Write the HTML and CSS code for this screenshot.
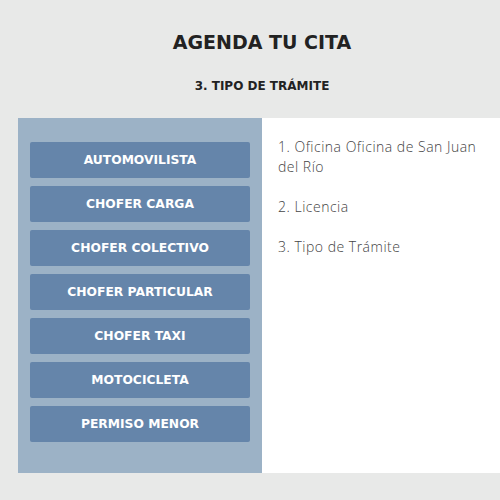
FILE: index.html
```html
<!DOCTYPE html>
<html lang="es">
<head>
<meta charset="utf-8">
<title>Agenda tu cita</title>
<link rel="stylesheet" href="styles.css">
</head>
<body>
<div class="page">
  <header class="head">
    <h1 class="title">AGENDA TU CITA</h1>
    <h2 class="subtitle">3. TIPO DE TRÁMITE</h2>
  </header>
  <main class="panel">
    <nav class="options">
      <button class="opt">AUTOMOVILISTA</button>
      <button class="opt">CHOFER CARGA</button>
      <button class="opt">CHOFER COLECTIVO</button>
      <button class="opt">CHOFER PARTICULAR</button>
      <button class="opt">CHOFER TAXI</button>
      <button class="opt">MOTOCICLETA</button>
      <button class="opt">PERMISO MENOR</button>
    </nav>
    <section class="summary">
      <p>1. Oficina Oficina de San Juan del Río</p>
      <p>2. Licencia</p>
      <p>3. Tipo de Trámite</p>
    </section>
  </main>
</div>
</body>
</html>
```

FILE: styles.css
```css
html, body {
  margin: 0;
  padding: 0;
  background: #e8e9e8;
}
body {
  font-family: "DejaVu Sans", "Open Sans", sans-serif;
  width: 500px;
  height: 500px;
  overflow: hidden;
}
.page {
  padding-top: 30px;
  margin-left: 18px;
  width: 488px;
}
.head {
  text-align: center;
  color: #222;
}
.title {
  margin: 0;
  font-size: 19px;
  font-weight: bold;
  line-height: 24px;
}
.subtitle {
  margin: 23px 0 0;
  font-size: 12px;
  font-weight: bold;
  line-height: 18px;
}
.panel {
  margin-top: 23px;
  display: flex;
  height: 355px;
}
.options {
  width: 220px;
  flex: none;
  background: #9cb2c6;
  padding: 24px 12px 0;
  display: flex;
  flex-direction: column;
  gap: 8px;
}
.opt {
  height: 36px;
  border: none;
  border-radius: 2px;
  background: #6585aa;
  color: #fff;
  font-family: inherit;
  font-weight: bold;
  font-size: 12.3px;
  padding: 0;
  cursor: pointer;
}
.summary {
  flex: 1;
  background: #fff;
  padding: 19px 28px 0 16px;
  color: #444;
  font-family: "Open Sans", sans-serif;
  font-weight: 300;
  font-size: 14px;
  letter-spacing: 0.5px;
  line-height: 20px;
}
.summary p {
  margin: 0 0 20px;
}
```
